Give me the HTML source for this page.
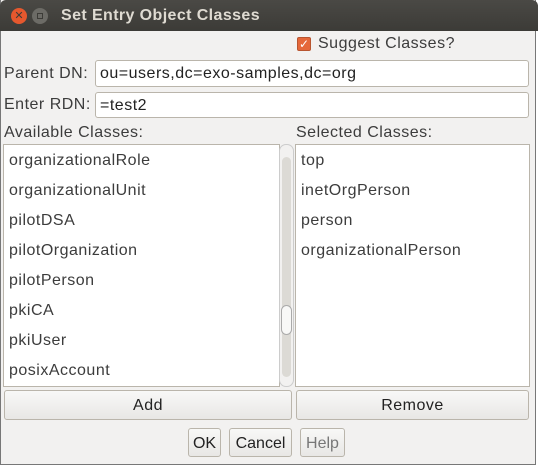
<!DOCTYPE html>
<html><head><style>
*{margin:0;padding:0;box-sizing:border-box}
body{width:538px;height:465px;background:#fff;font-family:"Liberation Sans","DejaVu Sans",sans-serif;color:#3c3c3c;overflow:hidden;position:relative;letter-spacing:0.5px}
.win{position:absolute;left:0;top:0;width:536px;height:465px;background:#f2f1f0;border:1px solid #777;border-top:none}
.title{position:absolute;left:0;top:0;width:538px;height:31px;background:linear-gradient(#4a4945,#3c3b37);border-radius:6px 6px 0 0;color:#dfdbd2;font-weight:bold;font-size:16px;letter-spacing:0.4px}
.title span{position:absolute;left:61px;top:7px}
.b{position:absolute;top:8px;width:16px;height:16px;border-radius:50%;letter-spacing:0}
.t{position:absolute;font-size:16px;white-space:nowrap}
.field{position:absolute;background:#fff;border:1px solid #bab5ab;border-radius:3px;font-size:16px;padding:4px 0 0 4px;color:#222}
.list{position:absolute;background:#fff;border:1px solid #bab5ab}
.list div{height:30px;line-height:32px;padding-left:5px;font-size:16px}
.btn{position:absolute;border:1px solid #bab5ab;border-radius:3px;background:linear-gradient(#f8f8f7,#e8e7e5);font-size:16px;text-align:center;color:#222}
</style></head><body>
<div class="win"></div>
<div class="title">
<div class="b" style="left:11px;background:#e5582e;color:#3c3b37;font-size:11px;text-align:center;line-height:16px">✕</div>
<div class="b" style="left:32px;background:#6c6b66"><div style="position:absolute;left:5px;top:5px;width:6px;height:6px;border:1px solid #3c3b37"></div></div>
<span>Set Entry Object Classes</span></div>
<div style="position:absolute;left:297px;top:37px;width:14px;height:14px;background:#e5683a;border:1px solid #b85530;border-radius:2px;color:#fff;font-size:12px;line-height:12px;text-align:center;letter-spacing:0">✓</div>
<div class="t" style="left:318px;top:35px">Suggest Classes?</div>
<div class="t" style="left:4px;top:65px">Parent DN:</div>
<div class="field" style="left:95px;top:60px;width:434px;height:27px">ou=users,dc=exo-samples,dc=org</div>
<div class="t" style="left:4px;top:96px">Enter RDN:</div>
<div class="field" style="left:95px;top:92px;width:434px;height:26px">=test2</div>
<div class="t" style="left:4px;top:124px">Available Classes:</div>
<div class="t" style="left:296px;top:124px">Selected Classes:</div>
<div class="list" style="left:3px;top:144px;width:277px;height:243px">
<div>organizationalRole</div><div>organizationalUnit</div><div>pilotDSA</div><div>pilotOrganization</div><div>pilotPerson</div><div>pkiCA</div><div>pkiUser</div><div>posixAccount</div></div>
<div style="position:absolute;left:279px;top:144px;width:15px;height:243px;background:#f2f1f0;border:1px solid #ccc;border-radius:7px">
<div style="position:absolute;left:2px;top:12px;width:9px;height:220px;background:#dcdad5;border-radius:5px"></div>
<div style="position:absolute;left:1px;top:160px;width:11px;height:30px;background:#f8f8f7;border:1px solid #aaa;border-radius:6px"></div></div>
<div class="list" style="left:295px;top:144px;width:235px;height:243px">
<div>top</div><div>inetOrgPerson</div><div>person</div><div>organizationalPerson</div></div>
<div class="btn" style="left:4px;top:390px;width:288px;height:30px;line-height:30px">Add</div>
<div class="btn" style="left:296px;top:390px;width:233px;height:30px;line-height:30px">Remove</div>
<div class="btn" style="left:188px;top:428px;width:33px;height:29px;line-height:29px;letter-spacing:0">OK</div>
<div class="btn" style="left:229px;top:428px;width:63px;height:29px;line-height:29px;letter-spacing:0">Cancel</div>
<div class="btn" style="left:300px;top:428px;width:45px;height:29px;line-height:29px;color:#777;letter-spacing:0">Help</div>
</body></html>
